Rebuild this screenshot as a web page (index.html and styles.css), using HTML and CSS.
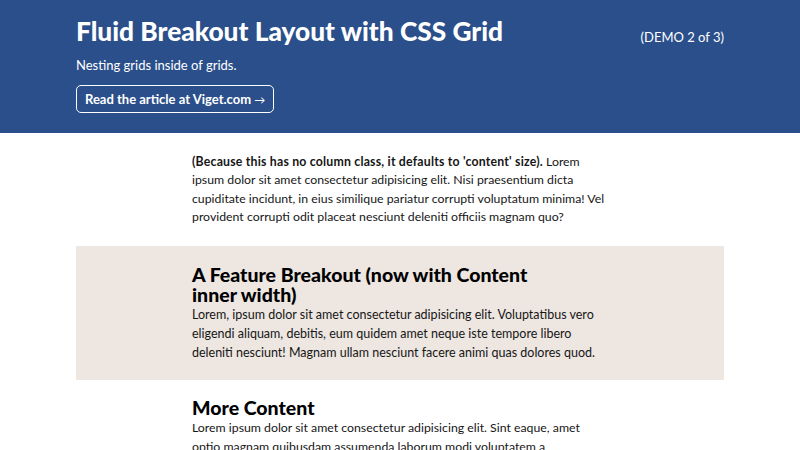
FILE: index.html
```html
<!DOCTYPE html>
<html lang="en">
<head>
<meta charset="utf-8">
<title>Fluid Breakout Layout with CSS Grid</title>
<link rel="stylesheet" href="styles.css">
</head>
<body>
<header class="site-header">
  <div class="header-inner">
    <div class="header-main">
      <h1 class="title">Fluid Breakout Layout with CSS Grid</h1>
      <p class="subtitle">Nesting grids inside of grids.</p>
      <a class="btn" href="#">Read the article at Viget.com <span class="arrow">→</span></a>
    </div>
    <div class="demo">(DEMO 2 of 3)</div>
  </div>
</header>
<main class="grid">
  <p class="content intro"><strong>(Because this has no column class, it defaults to 'content' size).</strong> Lorem ipsum dolor sit amet consectetur adipisicing elit. Nisi praesentium dicta cupiditate incidunt, in eius similique pariatur corrupti voluptatum minima! Vel provident corrupti odit placeat nesciunt deleniti officiis magnam quo?</p>
  <section class="feature">
    <div class="feature-inner">
      <h2 class="feature-title">A Feature Breakout (now with Content inner width)</h2>
      <p class="feature-text">Lorem, ipsum dolor sit amet consectetur adipisicing elit. Voluptatibus vero eligendi aliquam, debitis, eum quidem amet neque iste tempore libero deleniti nesciunt! Magnam ullam nesciunt facere animi quas dolores quod.</p>
    </div>
  </section>
  <section class="content more">
    <h2 class="more-title">More Content</h2>
    <p class="more-text">Lorem ipsum dolor sit amet consectetur adipisicing elit. Sint eaque, amet optio magnam quibusdam assumenda laborum modi voluptatem a reiciendis, tempore at eveniet, dolore accusantium harum illo quidem.</p>
  </section>
</main>
</body>
</html>
```

FILE: styles.css
```css
* { box-sizing: border-box; }
html, body { margin: 0; padding: 0; }
body {
  font-family: Lato, "Noto Sans", sans-serif;
  color: #161616;
  background: #fff;
  overflow: hidden;
  height: 450px;
}
.site-header {
  background: #2a4f8b;
  color: #fff;
  height: 133px;
  padding: 15px 76px 0;
}
.header-inner {
  display: flex;
  justify-content: space-between;
  align-items: flex-start;
}
.title {
  margin: 0;
  font-size: 26.3px;
  font-weight: 900;
  line-height: 32px;
}
.subtitle {
  margin: 9px 0 0;
  font-size: 13px;
  line-height: 18px;
}
.btn {
  display: inline-block;
  margin-top: 11px;
  color: #fff;
  text-decoration: none;
  border: 1.5px solid #fff;
  border-radius: 5px;
  padding: 3.5px 8px;
  font-size: 13px;
  font-weight: 700;
  line-height: 18px;
}
.arrow {
  font-weight: 400;
  font-size: 11px;
}
.demo {
  font-size: 13px;
  margin-top: 13px;
  line-height: 18px;
}
.grid {
  display: grid;
  grid-template-columns: 76px 116px 420px 112px 76px;
  padding-top: 20px;
}
.content { grid-column: 3; }
.intro {
  margin: 0;
  font-size: 12.3px;
  line-height: 18.4px;
}
.intro strong { letter-spacing: 0.2px; }
.feature {
  grid-column: 2 / 5;
  background: #ede6e1;
  margin-top: 19px;
  display: grid;
  grid-template-columns: 116px 416px 116px;
  padding: 19px 0 18px;
}
.feature-inner { grid-column: 2; }
.feature-title {
  margin: 0;
  font-size: 19.5px;
  font-weight: 900;
  line-height: 20px;
  color: #000;
  max-width: 360px;
}
.feature-text {
  margin: 0;
  font-size: 12.5px;
  line-height: 19px;
}
.more { padding-top: 18px; }
.more-title {
  margin: 0;
  font-size: 19.5px;
  font-weight: 900;
  line-height: 20px;
  color: #000;
}
.more-text {
  margin: 0;
  font-size: 12.3px;
  line-height: 19px;
  max-width: 405px;
}
```
